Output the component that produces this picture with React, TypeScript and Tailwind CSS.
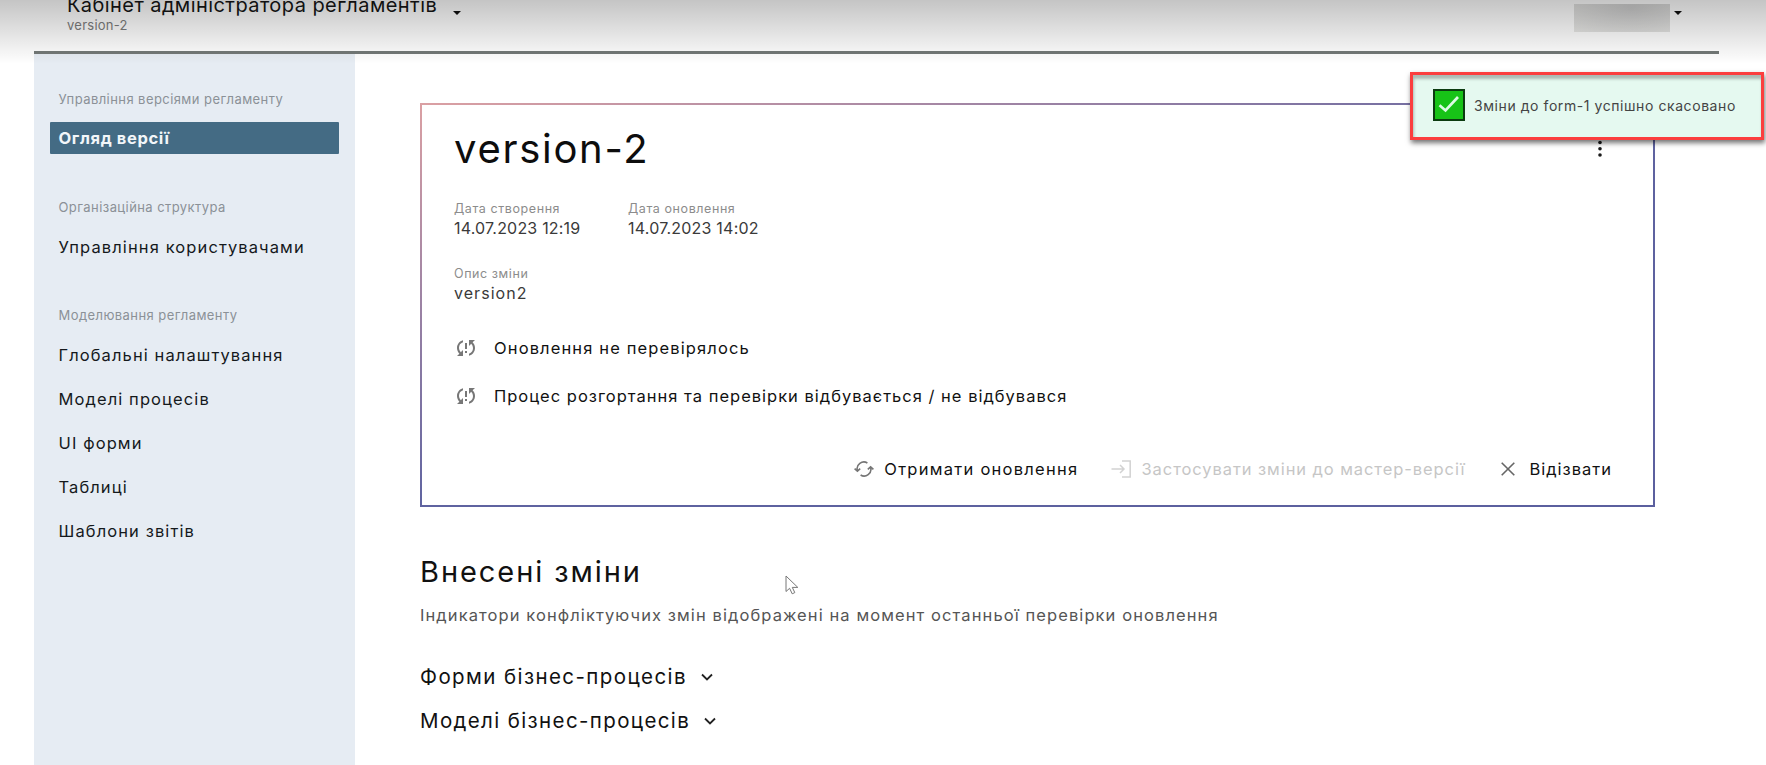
import React from "react";
import { MdSyncProblem } from "react-icons/md";

const sections = [
  { label: "Управління версіями регламенту", items: ["Огляд версії"] },
  { label: "Організаційна структура", items: ["Управління користувачами"] },
  {
    label: "Моделювання регламенту",
    items: ["Глобальні налаштування", "Моделі процесів", "UI форми", "Таблиці", "Шаблони звітів"],
  },
];

function Caret({ className }: { className: string }) {
  return (
    <svg viewBox="0 0 8 4" className={className}>
      <path d="M0 0h8L4 4z" fill="#111" />
    </svg>
  );
}

function Chevron() {
  return (
    <svg viewBox="0 0 12 8" className="h-2 w-3" fill="none" stroke="#222" strokeWidth="1.8">
      <path d="M1 1.5l5 5 5-5" />
    </svg>
  );
}

function RefreshIcon() {
  return (
    <svg viewBox="0 0 20 16" className="h-4 w-5" fill="none" stroke="#757575" strokeWidth="1.6">
      <path d="M3.3 9.5A6.8 6.8 0 0 1 13.4 2" />
      <path d="M0.6 7.6l2.8 2.6 2.8-2.6" />
      <path d="M16.7 6.5A6.8 6.8 0 0 1 6.6 14" />
      <path d="M13.8 8.4l2.8-2.6 2.8 2.6" />
    </svg>
  );
}

function ApplyIcon() {
  return (
    <svg viewBox="0 0 20 18" className="h-[18px] w-5" fill="none" stroke="#d2d2d2" strokeWidth="1.5">
      <path d="M0.5 9h12.5M9 5l4 4-4 4" />
      <path d="M11 0.9h8.2v16.2H11" />
    </svg>
  );
}

function CloseIcon() {
  return (
    <svg viewBox="0 0 14 14" className="size-[14px]" fill="none" stroke="#666" strokeWidth="1.6">
      <path d="M0.7 0.7l12.6 12.6M13.3 0.7L0.7 13.3" />
    </svg>
  );
}

function Header() {
  return (
    <header className="h-[54px] pr-[47px] pl-[34px]">
      <div className="flex h-full justify-between border-b-[3px] border-[#737977]">
        <div className="-mt-[9px] pl-[33px]">
          <div className="flex h-7 items-center">
            <span className="text-[20px] leading-7 tracking-[0.43px] text-[#151515]">
              Кабінет адміністратора регламентів
            </span>
            <Caret className="mt-4 ml-4 h-1 w-2" />
          </div>
          <div className="-mt-[2px] text-[13px] leading-[17px] tracking-[0.25px] text-[#7c7c7c]">version-2</div>
        </div>
        <div className="flex pt-1 pr-[37px]">
          <div className="h-7 w-24 bg-radial-[at_60%_15%] from-[#cecece] to-[#e8e8e6]" />
          <Caret className="mt-[7px] ml-1 h-1 w-2" />
        </div>
      </div>
    </header>
  );
}

function Sidebar() {
  return (
    <aside className="w-[321px] shrink-0 bg-[#e6ecf3] pt-[37px] pr-4 pl-4">
      {sections.map((s, i) => (
        <div key={s.label} className="mb-[45px]">
          <div className="mb-[15px] h-4 pl-[8.5px] text-[13px] leading-4 tracking-[0.43px] text-[#8b9197]">{s.label}</div>
          <nav className="flex flex-col gap-3">
            {s.items.map((t) => (
              <a
                key={t}
                className={
                  i === 0
                    ? "h-8 rounded-[1px] bg-[#446b84] pl-[8.5px] text-[16.5px] font-bold leading-8 tracking-[0.62px] text-[#f2f6f9]"
                    : "h-8 pl-[8.5px] text-[16.5px] leading-[34px] tracking-[1.1px] text-[#15191c]"
                }
              >
                {t}
              </a>
            ))}
          </nav>
        </div>
      ))}
    </aside>
  );
}

function Field({ label, value, className }: { label: string; value: React.ReactNode; className?: string }) {
  return (
    <div className={className}>
      <div className="text-[12.5px] leading-4 tracking-[0.58px] text-[#8c8c8c]">{label}</div>
      <div className="mt-[1px] text-[16px] leading-5 text-[#3a3a3a]">{value}</div>
    </div>
  );
}

function Toast() {
  return (
    <div className="absolute top-[72px] left-[1410px] flex h-[68px] w-[354px] border-[3px] border-[#fb3e3e] bg-[#e5f9f0] pt-[14px] pl-5 shadow-[1px_3px_5px_rgba(0,0,0,0.55),inset_1px_4px_3px_rgba(0,0,0,0.25)]">
      <svg viewBox="0 0 32 32" className="size-8" fill="none">
        <rect x="1" y="1" width="30" height="30" fill="#17c317" stroke="#0b3b10" strokeWidth="2" />
        <path d="M6.5 16.2l6 5.2L25 8" stroke="#dcfbe4" strokeWidth="2.7" />
      </svg>
      <span className="ml-[9px] text-[14px] leading-[34px] tracking-[0.57px] text-[#444]">
        Зміни до form-1 успішно скасовано
      </span>
    </div>
  );
}

export default function App() {
  return (
    <div className="relative flex h-[765px] w-[1766px] flex-col overflow-hidden bg-white font-['Inter','Noto_Sans',sans-serif]">
      <div className="pointer-events-none absolute inset-x-0 top-0 h-[64px] bg-linear-to-b from-black/23 to-transparent" />
      <Header />
      <div className="flex flex-1 pl-[34px]">
        <Sidebar />
        <main className="flex-1 pt-[49px] pl-[65px]">
          <section className="h-[404px] w-[1235px] bg-linear-to-br from-[#dba0a3] via-[#5f63a0] to-[#5b5f9e] p-[2px]">
            <div className="h-full bg-white pt-[22px] pr-[41px] pl-8">
              <div className="flex h-11 items-center justify-between">
                <h1 className="text-[40px] leading-[44px] tracking-[1.7px] text-[#0d0d0d]">version-2</h1>
                <svg viewBox="0 0 4 18" className="mr-[10px] h-[18px] w-1" fill="#1a1a1a">
                  <circle cx="2" cy="2.5" r="1.8" />
                  <circle cx="2" cy="8.8" r="1.8" />
                  <circle cx="2" cy="15" r="1.8" />
                </svg>
              </div>
              <div className="mt-[30px] flex">
                <Field
                  label="Дата створення"
                  value={<span className="tracking-[0.2px]">14.07.2023 12:19</span>}
                  className="w-[174px]"
                />
                <Field label="Дата оновлення" value={<span className="tracking-[0.22px]">14.07.2023 14:02</span>} />
              </div>
              <Field
                label="Опис зміни"
                value={<span className="tracking-[1.05px]">version2</span>}
                className="mt-[28px]"
              />
              <div className="mt-[33px] flex h-6 items-center text-[16.5px] text-[#111]">
                <MdSyncProblem className="mr-4 size-6 text-[#777]" />
                <span className="tracking-[1.13px]">Оновлення не перевірялось</span>
              </div>
              <div className="mt-6 flex h-6 items-center text-[16.5px] text-[#111]">
                <MdSyncProblem className="mr-4 size-6 text-[#777]" />
                <span className="tracking-[1px]">
                  Процес розгортання та перевірки відбувається / не відбувався
                </span>
              </div>
              <div className="mt-[49px] flex h-6 items-center justify-end text-[16.5px] text-[#111]">
                <RefreshIcon />
                <span className="ml-[10px] tracking-[1.27px]">Отримати оновлення</span>
                <span className="ml-[33px]">
                  <ApplyIcon />
                </span>
                <span className="ml-[10px] tracking-[0.92px] text-[#c6c6c6]">
                  Застосувати зміни до мастер-версії
                </span>
                <span className="ml-[36px]">
                  <CloseIcon />
                </span>
                <span className="ml-[14px] tracking-[1px]">Відізвати</span>
              </div>
            </div>
          </section>
          <h2 className="mt-[47px] text-[29px] leading-9 tracking-[1.93px] text-[#111]">Внесені зміни</h2>
          <p className="mt-[13px] text-[16.5px] leading-6 tracking-[1.09px] text-[#555]">
            Індикатори конфліктуючих змін відображені на момент останньої перевірки оновлення
          </p>
          <div className="mt-9 flex h-7 items-center gap-[14px] text-[20.5px] text-[#111]">
            <span className="tracking-[1.41px]">Форми бізнес-процесів</span>
            <Chevron />
          </div>
          <div className="mt-4 flex h-7 items-center gap-[14px] text-[20.5px] text-[#111]">
            <span className="tracking-[1.37px]">Моделі бізнес-процесів</span>
            <Chevron />
          </div>
        </main>
      </div>
      <Toast />
      <svg viewBox="0 0 14 20" className="absolute top-[575px] left-[785px] h-5 w-[14px]" fill="#fff" stroke="#777">
        <path d="M1 1v15.5l3.6-3.2 2.6 5.5 2.6-1.2-2.5-5.2H12.8z" />
      </svg>
    </div>
  );
}
